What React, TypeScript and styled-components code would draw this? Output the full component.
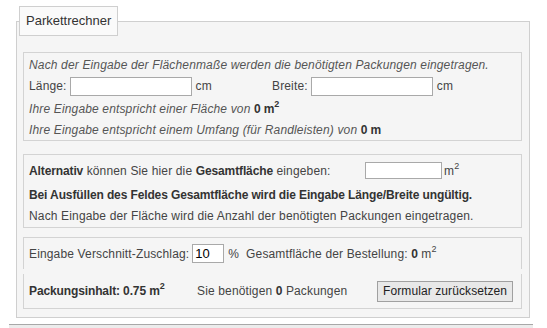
import React, { FC } from 'react';
import styled, { createGlobalStyle } from 'styled-components';

const GlobalStyle = createGlobalStyle`
  html, body {
    margin: 0;
    padding: 0;
    background: #fff;
  }
  body {
    font-family: "Liberation Sans", Arial, sans-serif;
    font-size: 12px;
    letter-spacing: 0.15px;
    color: #444;
  }
`;

const Page = styled.div`
  width: 547px;
  height: 328px;
  overflow: hidden;
  padding-top: 6px;
  box-sizing: border-box;
`;

const Fieldset = styled.fieldset`
  margin: 0 0 0 16px;
  width: 512px;
  box-sizing: border-box;
  border: 1px solid #cfcfcf;
  background: #f5f5f5;
  padding: 16px 7px 8px 6px;
`;

const Legend = styled.legend`
  margin-left: -4px;
  padding: 6px 6px;
  line-height: 16px;
  font-size: 13px;
  letter-spacing: 0;
  color: #333;
  background: #fafafa;
  border: 1px solid #cfcfcf;
`;

type BoxProps = {
  gap: number,
};

const Box = styled.div<BoxProps>`
  border: 1px solid #d3d3d3;
  padding: 1px 6px 0 5px;
  margin-bottom: ${ props => props.gap }px;
`;

type SegmentProps = {
  part: 'top' | 'bottom',
};

const Segment = styled.div<SegmentProps>`
  border: 1px solid #d3d3d3;
  padding: 0 6px 0 5px;
  ${ props => (props.part === 'top' ? `
    border-bottom: none;
    margin-bottom: 5px;
  ` : `
    border-top: none;
  `)};
`;

type LineProps = {
  h?: number,
  italic?: boolean,
};

const Line = styled.div<LineProps>`
  display: flex;
  align-items: center;
  height: ${ props => props.h || 22 }px;
  font-style: ${ props => (props.italic ? 'italic' : 'normal') };
  color: ${ props => (props.italic ? '#555' : '#444') };
  white-space: nowrap;
`;

const Pair = styled.div`
  display: grid;
  grid-template-columns: 243px 243px;
  height: 22px;
  align-items: center;
`;

const Cell = styled.div<{ w?: number }>`
  display: flex;
  align-items: center;
  ${ props => (props.w ? `width: ${ props.w }px; flex: none;` : '') }
`;

type InputProps = {
  w: number,
  h: number,
  tight?: boolean,
};

const TextInput = styled.input<InputProps>`
  width: ${ props => props.w }px;
  height: ${ props => props.h }px;
  box-sizing: border-box;
  border: 1px solid #a9a9a9;
  background: #fff;
  padding: 0 2px;
  margin: 0 ${ props => (props.tight ? 2 : 4) }px 0 3px;
  font-family: "Liberation Sans", Arial, sans-serif;
  font-size: 13px;
  color: #000;
  outline: none;
`;

const Unit = styled.span`
  font-style: normal;
`;

const Sup = styled.sup`
  font-size: 9px;
  line-height: 0;
  vertical-align: 6px;
`;

const Strong = styled.b`
  font-weight: bold;
  font-style: normal;
  letter-spacing: -0.12px;
  color: #333;
`;

const Button = styled.button`
  height: 21px;
  padding: 0 5px;
  border: 1px solid #a0a0a0;
  background: #e8e8e8;
  font-family: "Liberation Sans", Arial, sans-serif;
  font-size: 12px;
  letter-spacing: 0.1px;
  color: #222;
  cursor: pointer;
`;

const Footer = styled.div`
  margin: 6px 0 0 9px;
  width: 524px;
  height: 10px;
  border-top: 1px solid #a8a8a8;
  background: #ececec;
`;

const SquareMeter: FC = () => (
  <Unit>m<Sup>2</Sup></Unit>
);

const App: FC = () => {
  return (
    <Page>
      <GlobalStyle />
      <Fieldset>
        <Legend>Parkettrechner</Legend>

        <Box gap={ 13 }>
          <Line h={ 21 } italic>
            Nach der Eingabe der Flächenmaße werden die benötigten Packungen eingetragen.
          </Line>
          <Pair>
            <Cell>Länge:<TextInput w={ 122 } h={ 19 } name="laenge" />cm</Cell>
            <Cell>Breite:<TextInput w={ 122 } h={ 19 } name="breite" />cm</Cell>
          </Pair>
          <Line h={ 23 } italic>
            Ihre Eingabe entspricht einer Fläche von&nbsp;<Strong>0 <SquareMeter /></Strong>
          </Line>
          <Line h={ 20 } italic>
            Ihre Eingabe entspricht einem Umfang (für Randleisten) von&nbsp;<Strong>0 m</Strong>
          </Line>
        </Box>

        <Box gap={ 9 }>
          <Line h={ 29 }>
            <Cell w={ 333 }>
              <Strong>Alternativ</Strong>&nbsp;können Sie hier die&nbsp;<Strong>Gesamtfläche</Strong>&nbsp;eingeben:
            </Cell>
            <TextInput w={ 77 } h={ 17 } name="flaeche" tight />
            <SquareMeter />
          </Line>
          <Line h={ 19 }>
            <Strong>Bei Ausfüllen des Feldes Gesamtfläche wird die Eingabe Länge/Breite ungültig.</Strong>
          </Line>
          <Line h={ 23 }>
            Nach Eingabe der Fläche wird die Anzahl der benötigten Packungen eingetragen.
          </Line>
        </Box>

        <Segment part="top">
          <Line h={ 31 }>
            Eingabe Verschnitt-Zuschlag:
            <TextInput w={ 32 } h={ 19 } name="verschnitt" defaultValue="10" />
            %&nbsp;&nbsp;Gesamtfläche der Bestellung:&nbsp;<Strong>0</Strong>&nbsp;<SquareMeter />
          </Line>
        </Segment>
        <Segment part="bottom">
          <Line h={ 34 }>
            <Cell w={ 168 }>
              <Strong>Packungsinhalt: 0.75 <SquareMeter /></Strong>
            </Cell>
            <Cell w={ 180 }>
              Sie benötigen&nbsp;<Strong>0</Strong>&nbsp;Packungen
            </Cell>
            <Button type="button">Formular zurücksetzen</Button>
          </Line>
        </Segment>
      </Fieldset>
      <Footer />
    </Page>
  );
};

export default App;
